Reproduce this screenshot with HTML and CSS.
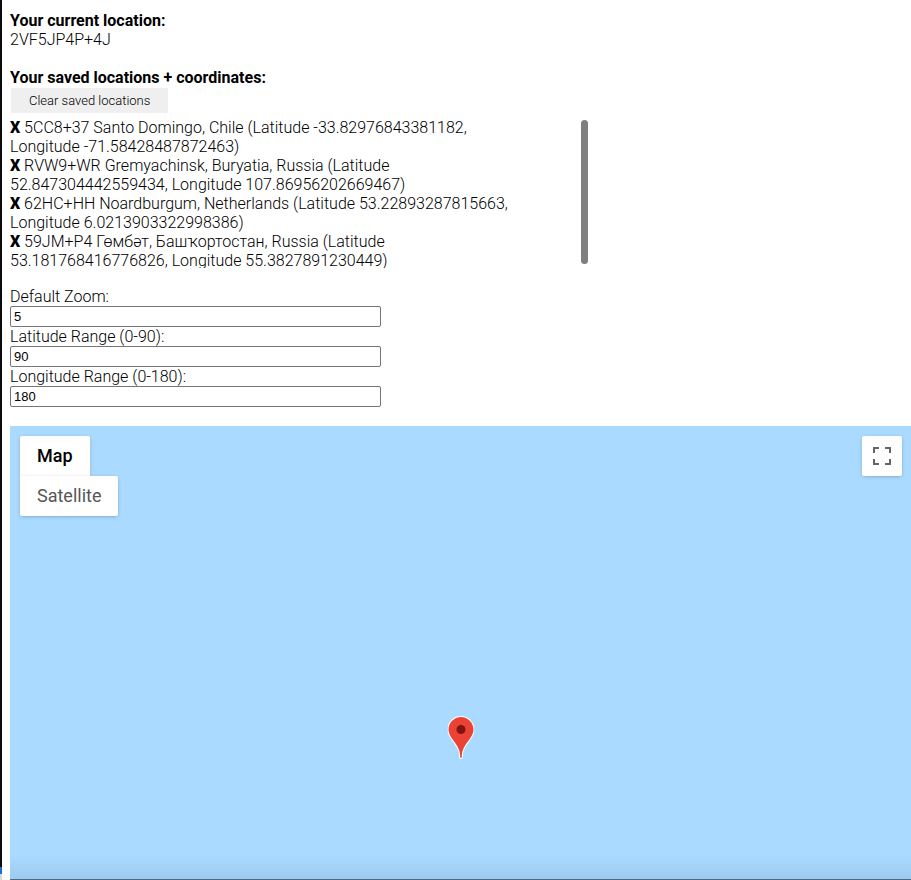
FILE: index.html
```html
<!DOCTYPE html>
<html lang="en">
<head>
<meta charset="utf-8">
<meta name="viewport" content="width=device-width, initial-scale=1">
<title>Saved locations</title>
<link rel="stylesheet" href="styles.css">
</head>
<body>
<main class="page">
  <section class="current">
    <h2 class="heading">Your current location:</h2>
    <p class="code">2VF5JP4P+4J</p>
  </section>

  <section class="saved">
    <h2 class="heading">Your saved locations + coordinates:</h2>
    <button class="clear" type="button">Clear saved locations</button>
    <div class="saved-box">
      <ul class="saved-list">
        <li><button class="remove" type="button">X</button> 5CC8+37 Santo Domingo, Chile (Latitude -33.82976843381182, Longitude -71.58428487872463)</li>
        <li><button class="remove" type="button">X</button> RVW9+WR Gremyachinsk, Buryatia, Russia (Latitude 52.847304442559434, Longitude 107.86956202669467)</li>
        <li><button class="remove" type="button">X</button> 62HC+HH Noardburgum, Netherlands (Latitude 53.22893287815663, Longitude 6.0213903322998386)</li>
        <li><button class="remove" type="button">X</button> 59JM+P4 Гөмбәт, Башҡортостан, Russia (Latitude 53.181768416776826, Longitude 55.3827891230449)</li>
      </ul>
      <div class="thumb"></div>
    </div>
  </section>

  <form class="settings">
    <label for="zoom">Default Zoom:</label>
    <input id="zoom" type="text" value="5">
    <label for="lat">Latitude Range (0-90):</label>
    <input id="lat" type="text" value="90">
    <label for="lng">Longitude Range (0-180):</label>
    <input id="lng" type="text" value="180">
  </form>

  <section class="map">
    <div class="map-types">
      <button class="map-type active" type="button">Map</button>
      <button class="map-type" type="button">Satellite</button>
    </div>
    <button class="fullscreen" type="button" aria-label="Toggle fullscreen view">
      <svg width="18" height="18" viewBox="0 0 18 18" fill="#666"><path d="M0 0v6h2V2h4V0H0zm16 0h-4v2h4v4h2V0h-2zm0 16h-4v2h6v-6h-2v4zM2 12H0v6h6v-2H2v-4z"/></svg>
    </button>
    <svg class="pin" width="27" height="43" viewBox="0 0 27 43">
      <path d="M13.500 0C6 0 0 6 0 13.500c0 4.200 1.900 7.400 4.500 11C8.200 29.700 11.700 34 11.700 41c0 1.200.7 1.900 1.800 1.900s1.800-.7 1.800-1.900c0-7 3.500-11.300 7.200-16.500 2.600-3.600 4.500-6.800 4.500-11C27 6 21 0 13.500 0z" fill="#fff"/>
      <path d="M13.500 1C6.600 1 1 6.600 1 13.500c0 3.800 1.800 6.900 4.300 10.300C9.200 29.100 12.700 33.500 12.700 41c0 .6.300.9.800.9s.8-.3.800-.9c0-7.500 3.500-11.900 7.400-17.200 2.500-3.400 4.300-6.500 4.300-10.300C26 6.600 20.400 1 13.500 1z" fill="#ea4335"/>
      <circle cx="13.500" cy="13.500" r="4.500" fill="#811411"/>
    </svg>
  </section>
</main>
</body>
</html>
```
FILE: styles.css
```css
* {
  box-sizing: border-box;
}

body {
  margin: 0;
  background: #fff;
  color: #000;
  font: 300 16px/19px Roboto, sans-serif;
}

.page {
  display: flex;
  flex-direction: column;
  gap: 19px;
  min-height: 100vh;
  padding: 11px 0 0 8px;
  border-left: 2px solid #0b0b0d;
  border-image: linear-gradient(to top, #d8d8d8 7px, #1a6fd0 7px 14px, #0b0b0d 14px) 1;
}

.heading,
.code {
  margin: 0;
  font-size: 16px;
}

.heading {
  font-weight: 700;
}

.clear {
  display: block;
  height: 25px;
  margin: 1px;
  padding: 0 18px;
  border: 0;
  background: #efefef;
  color: #000;
  font: 300 13px/25px Roboto, sans-serif;
}

.saved-box {
  position: relative;
  max-width: 578px;
  height: 150px;
  margin-top: 5px;
  overflow: hidden;
}

.saved-list {
  margin: 0;
  padding: 0 60px 0 0;
  list-style: none;
}

.remove {
  padding: 0;
  border: 0;
  background: none;
  color: #000;
  font: 900 16px/19px Roboto, sans-serif;
}

.thumb {
  position: absolute;
  top: 2px;
  right: 0;
  width: 7px;
  height: 144px;
  border-radius: 4px;
  background: #7f7f7f;
}

.settings {
  display: flex;
  flex-direction: column;
  max-width: 371px;
}

.settings input {
  width: 100%;
  height: 21px;
  padding: 1px 3px;
  border: 1px solid #767676;
  border-radius: 2px;
  background: #fff;
  color: #000;
  font: 13px "Liberation Sans", Arial, sans-serif;
}

.map {
  position: relative;
  display: flex;
  flex: 1;
  align-items: flex-start;
  justify-content: space-between;
  min-height: 320px;
  padding: 10px 9px 10px 10px;
  border-bottom: 1px solid #4f6b80;
  background: linear-gradient(to top, #9ccbee, #aadaff 24px);
}

.map-types {
  display: flex;
  flex-direction: column;
  align-items: flex-start;
}

.map-type {
  height: 40px;
  padding: 0 17px;
  border: 0;
  border-radius: 0 2px 2px 2px;
  background: #fff;
  box-shadow: 0 1px 4px -1px rgba(0, 0, 0, 0.3);
  color: #565656;
  font: 400 18px/40px Roboto, sans-serif;
}

.map-type.active {
  border-radius: 2px 2px 0 0;
  color: #000;
  font-weight: 500;
}

.fullscreen {
  display: flex;
  align-items: center;
  justify-content: center;
  width: 40px;
  height: 40px;
  padding: 0;
  border: 0;
  border-radius: 2px;
  background: #fff;
  box-shadow: 0 1px 4px -1px rgba(0, 0, 0, 0.3);
}

.pin {
  position: absolute;
  top: 290px;
  left: 50%;
  transform: translateX(-50%);
}
```
